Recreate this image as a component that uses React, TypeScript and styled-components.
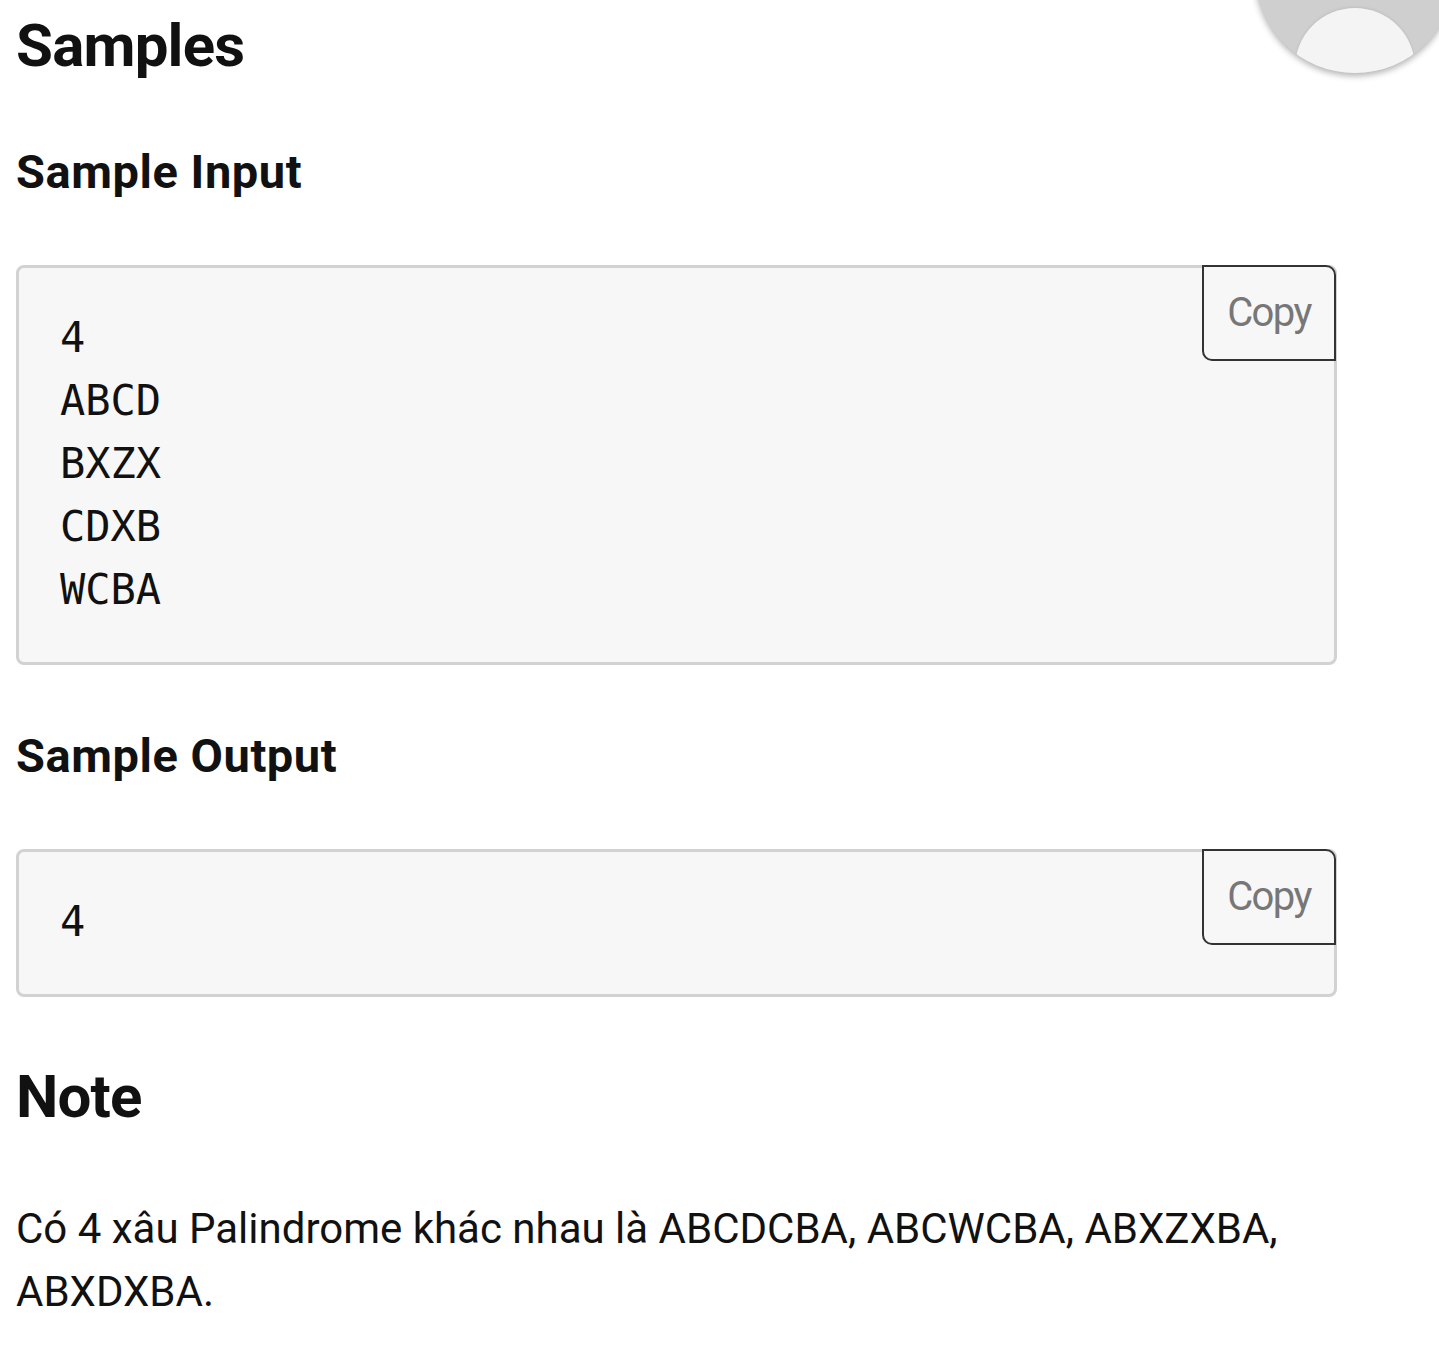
import React from "react";
import styled, { createGlobalStyle } from "styled-components";

const Global = createGlobalStyle`
  html, body { margin: 0; padding: 0; background: #ffffff; }
  body { font-family: Roboto, "Noto Sans", sans-serif; color: #111111; overflow: hidden; }
`;

const Page = styled.main`
  position: relative;
  width: 1439px;
  min-height: 1348px;
  padding: 11px 16px 0;
  box-sizing: border-box;
  display: flex;
  flex-direction: column;
  gap: 65px;
`;

const SectionTitle = styled.h2`
  margin: 0;
  font-size: 60px;
  line-height: 70px;
  font-weight: 700;
  letter-spacing: -0.8px;
  color: #111111;
`;

const SampleBlock = styled.section`
  display: flex;
  flex-direction: column;
  gap: 67px;
`;

const SampleTitle = styled.h3`
  margin: 0;
  font-size: 47px;
  line-height: 52px;
  font-weight: 700;
  letter-spacing: 0.55px;
  color: #111111;
`;

const SampleBox = styled.div`
  position: relative;
  width: 1321px;
  box-sizing: border-box;
  background: #f7f7f7;
  border: 3px solid #d2d2d2;
  border-radius: 8px;
`;

const Pre = styled.pre`
  margin: 0;
  padding: 38px 41px 41px;
  font-family: "DejaVu Sans Mono", monospace;
  font-size: 42px;
  line-height: 63px;
  color: #111111;
`;

const CopyButton = styled.button`
  position: absolute;
  top: -3px;
  right: -2px;
  width: 134px;
  height: 96px;
  box-sizing: border-box;
  background: #f7f7f7;
  border: 2.6px solid #333333;
  border-radius: 0 10px 0 10px;
  font-family: Roboto, sans-serif;
  font-size: 40px;
  letter-spacing: -1.6px;
  color: #777777;
  padding: 0;
  line-height: 1;
`;

const Paragraph = styled.p`
  margin: 0;
  font-size: 42px;
  line-height: 63px;
  color: #111111;
  width: 1330px;
`;

const ScrollFab = styled.div`
  position: absolute;
  top: -127px;
  left: 1255px;
  width: 200px;
  height: 200px;
  border-radius: 50%;
  background: #cfcfcf;
  box-shadow: 0 3px 6px rgba(0, 0, 0, 0.3);
  overflow: hidden;
`;

const FabKnob = styled.div`
  position: absolute;
  left: 40px;
  top: 135px;
  width: 120px;
  height: 120px;
  border-radius: 50%;
  background: #f4f4f4;
  box-shadow: 0 -1px 3px rgba(0, 0, 0, 0.08);
`;

const Sample: React.FC<{ title: string; text: string }> = ({ title, text }) => (
  <SampleBlock>
    <SampleTitle>{title}</SampleTitle>
    <SampleBox>
      <Pre>{text}</Pre>
      <CopyButton>Copy</CopyButton>
    </SampleBox>
  </SampleBlock>
);

const App: React.FC = () => (
  <>
    <Global />
    <Page>
      <SectionTitle>Samples</SectionTitle>
      <Sample title="Sample Input" text={"4\nABCD\nBXZX\nCDXB\nWCBA"} />
      <Sample title="Sample Output" text={"4"} />
      <SectionTitle>Note</SectionTitle>
      <Paragraph>
        Có 4 xâu Palindrome khác nhau là ABCDCBA, ABCWCBA, ABXZXBA, ABXDXBA.
      </Paragraph>
      <ScrollFab>
        <FabKnob />
      </ScrollFab>
    </Page>
  </>
);

export default App;
